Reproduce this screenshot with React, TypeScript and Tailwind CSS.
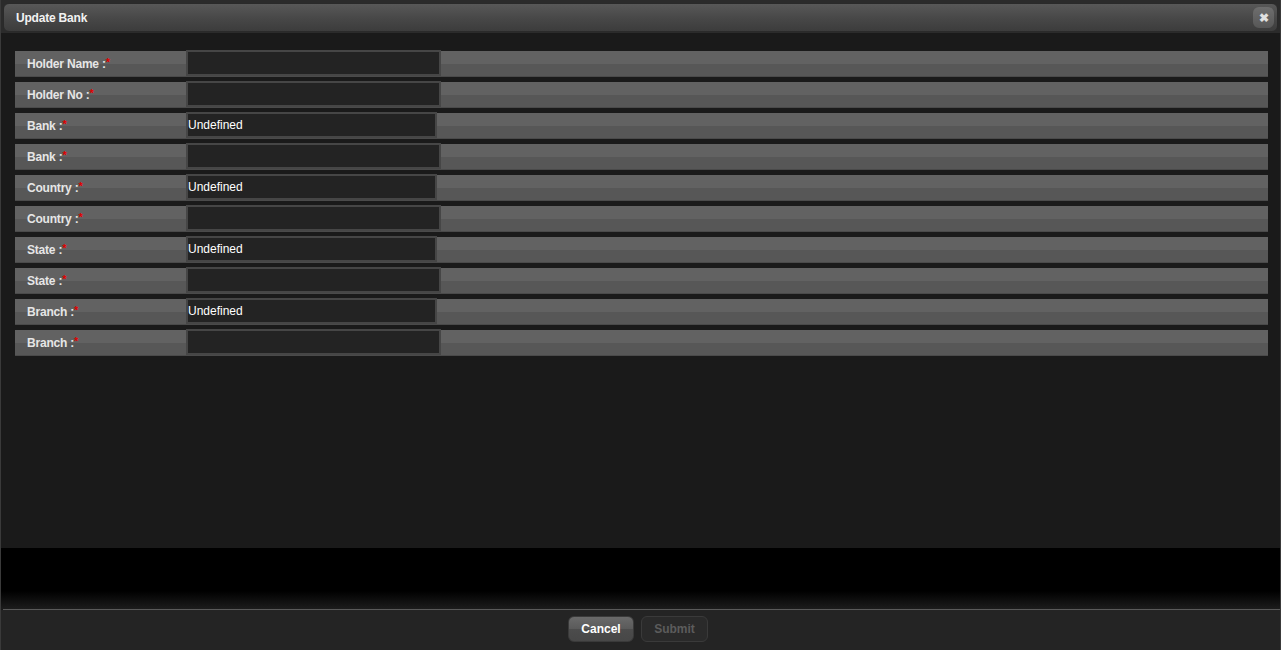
import React from "react";

type Field = { label: string; value?: string };

const fields: Field[] = [
  { label: "Holder Name :" },
  { label: "Holder No :" },
  { label: "Bank :", value: "Undefined" },
  { label: "Bank :" },
  { label: "Country :", value: "Undefined" },
  { label: "Country :" },
  { label: "State :", value: "Undefined" },
  { label: "State :" },
  { label: "Branch :", value: "Undefined" },
  { label: "Branch :" },
];

function FieldRow({ field }: { field: Field }) {
  const isSelect = field.value !== undefined;
  return (
    <div className="flex h-[26px] bg-[linear-gradient(to_bottom,#626262_0%,#626262_50%,#575757_52%,#575757_100%)] border-b border-[#4a4a4a]">
      <div className="w-[171px] flex items-center pl-3 text-[12px] font-bold text-[#e6e6e6] tracking-[-0.2px]">
        {field.label}
        <span className="text-[#e00000] text-[11px] self-start mt-[3px]">*</span>
      </div>
      <div
        className={`${isSelect ? "w-[251px]" : "w-[255px]"} h-[26px] -mt-px border-2 border-[#464646] bg-[#232323] flex items-center text-[12px] text-white`}
      >
        {field.value}
      </div>
    </div>
  );
}

export default function App() {
  return (
    <div
      className="w-[1281px] h-[650px] flex flex-col bg-[#1a1a1a] border-x border-[#3a3a3a] overflow-hidden"
      style={{ fontFamily: '"Liberation Sans", Arial, sans-serif' }}
    >
      <div className="bg-[#2b2b2b] px-[2px] pt-[3px] pb-px">
        <div className="h-[29px] rounded-md border border-[#2a2a2a] bg-[linear-gradient(to_bottom,#585858,#474747_55%,#3c3c3c)] flex items-center justify-between pl-[12px] pr-[3px]">
          <span className="text-[12px] font-bold text-[#f2f2f2] tracking-[-0.2px]">Update Bank</span>
          <button className="w-[21px] h-[21px] rounded-[6px] bg-[linear-gradient(to_bottom,#6e6e6e,#575757)] flex items-center justify-center text-[#e0e0e0] text-[12px] leading-none font-bold">
            ✖
          </button>
        </div>
      </div>

      <div className="flex-1 pt-[18px] pl-[14px] pr-[12px] flex flex-col gap-[5px]">
        {fields.map((f, i) => (
          <FieldRow key={i} field={f} />
        ))}
      </div>

      <div className="h-[61px] bg-[linear-gradient(to_bottom,#000000_0%,#000000_70%,#1c1c1c_100%)]" />
      <div className="h-px ml-[2px] bg-[#5a5a5a]" />
      <div className="h-[40px] bg-[#242424] flex items-start justify-center gap-[7px] pt-[6px] pr-[5px]">
        <button className="w-[66px] h-[26px] rounded-md bg-[linear-gradient(to_bottom,#6a6a6a,#5a5a5a_50%,#4c4c4c_52%,#474747)] text-[12px] font-bold text-white border border-[#3a3a3a]">
          Cancel
        </button>
        <button className="w-[67px] h-[26px] rounded-md bg-[#2a2a2a] border border-[#3a3a3a] text-[12px] font-bold text-[#5c5c5c]">
          Submit
        </button>
      </div>
    </div>
  );
}
